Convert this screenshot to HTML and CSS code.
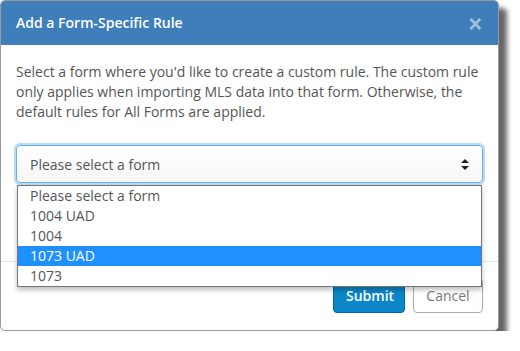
FILE: index.html
```html
<!DOCTYPE html>
<html lang="en">
<head>
    <meta charset="UTF-8">
    <title>Add a Form-Specific Rule</title>
    <link rel="stylesheet" href="styles.css">
</head>
<body>
    <div class="modal">
        <div class="modal-header">
            <h4>Add a Form-Specific Rule</h4>
            <span class="close">&times;</span>
        </div>
        <div class="modal-body">
            <p>Select a form where you'd like to create a custom rule. The custom rule only applies when importing MLS data into that form. Otherwise, the default rules for All Forms are applied.</p>
            <div class="select-wrap">
                <div class="select">
                    <span>Please select a form</span>
                    <svg class="arrows" width="8" height="11" viewBox="0 0 8 11">
                        <path d="M4 0 L8 4 H0 Z M0 7 H8 L4 11 Z" fill="#222"/>
                    </svg>
                </div>
                <ul class="options">
                    <li>Please select a form</li>
                    <li>1004 UAD</li>
                    <li>1004</li>
                    <li class="active">1073 UAD</li>
                    <li>1073</li>
                </ul>
            </div>
        </div>
        <div class="modal-footer">
            <button class="btn btn-primary">Submit</button>
            <button class="btn btn-default">Cancel</button>
        </div>
    </div>
</body>
</html>
```

FILE: styles.css
```css
body {
    margin: 0;
    padding: 0;
    background: #fff;
    font-family: "Open Sans", Arial, sans-serif;
    font-size: 14px;
    color: #555;
}
.modal {
    width: 497px;
    border: 1px solid #999;
    border-radius: 5px;
    background: #fff;
    box-shadow: 8px 8px 5px rgba(0, 0, 0, 0.6);
}
.modal-header {
    display: flex;
    align-items: center;
    justify-content: space-between;
    height: 44px;
    padding: 0 16px 0 15px;
    background-color: #3d7ebb;
    border-radius: 4px 4px 0 0;
}
.modal-header h4 {
    margin: 0;
    font-size: 14px;
    font-weight: 600;
    color: #fff;
    padding-bottom: 1px;
}
.close {
    font-family: Arial, sans-serif;
    font-size: 23px;
    font-weight: bold;
    line-height: 1;
    color: rgba(255, 255, 255, 0.55);
    padding-top: 3px;
}
.modal-body {
    padding: 17px 15px 78px 15px;
}
.modal-body p {
    margin: 0 0 23px;
    line-height: 20px;
    color: #555;
    padding-right: 1px;
}
.select-wrap {
    position: relative;
}
.select {
    display: flex;
    align-items: center;
    justify-content: space-between;
    height: 36px;
    padding: 0 13px 0 13px;
    border: 1px solid #66afe9;
    border-radius: 4px;
    background: linear-gradient(to bottom, #fff, #f6f6f6);
    box-shadow: 0 0 0 2px rgba(102, 175, 233, 0.45);
    color: #555;
}
.arrows {
    margin-top: 1px;
}
.options {
    position: absolute;
    top: 40px;
    left: 1px;
    right: 1px;
    margin: 0;
    padding: 0;
    list-style: none;
    background: #fff;
    border: 1px solid #767676;
    box-shadow: 0 3px 5px rgba(0, 0, 0, 0.25);
    z-index: 2;
}
.options li {
    height: 20px;
    line-height: 20px;
    padding-left: 12px;
    color: #555;
}
.options li.active {
    background-color: #1e90ff;
    color: #fff;
}
.modal-footer {
    display: flex;
    justify-content: flex-end;
    gap: 8px;
    padding: 16px 15px 17px;
    border-top: 1px solid #e5e5e5;
}
.btn {
    height: 35px;
    padding: 0 12px;
    font-family: "Open Sans", Arial, sans-serif;
    font-size: 14px;
    border-radius: 4px;
    cursor: pointer;
}
.btn-primary {
    width: 72px;
    background-color: #0a86c9;
    border: 1px solid #07679c;
    color: #fff;
    font-weight: 600;
}
.btn-default {
    width: 70px;
    background-color: #fff;
    border: 1px solid #aaa;
    color: #777;
}
```
